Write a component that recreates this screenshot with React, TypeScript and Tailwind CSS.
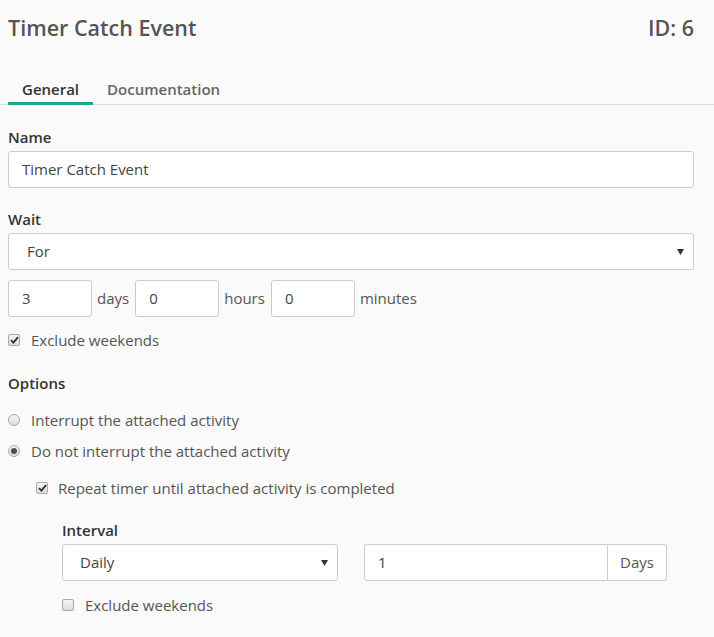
import React from "react";

const font = { fontFamily: '"Open Sans", "Liberation Sans", sans-serif' };

function Check({ checked }: { checked?: boolean }) {
  return (
    <span className="flex h-[12px] w-[12px] shrink-0 items-center justify-center rounded-[2px] border border-[#a9a9a9] bg-gradient-to-b from-[#f4f4f4] to-[#dedede]">
      {checked && (
        <svg width="9" height="8" viewBox="0 0 9 8">
          <path d="M1 4.2 L3.4 6.6 L8 1.2" fill="none" stroke="#333" strokeWidth="1.9" />
        </svg>
      )}
    </span>
  );
}

function Radio({ checked }: { checked?: boolean }) {
  return (
    <span className="flex h-[12px] w-[12px] shrink-0 items-center justify-center rounded-full border border-[#a9a9a9] bg-gradient-to-b from-[#f4f4f4] to-[#dedede]">
      {checked && <span className="h-[6px] w-[6px] rounded-full bg-[#4d4d4d]" />}
    </span>
  );
}

function Arrow() {
  return (
    <svg width="7" height="6" viewBox="0 0 7 6" className="shrink-0">
      <path d="M0 0 H7 L3.5 6 Z" fill="#333" />
    </svg>
  );
}

export default function App() {
  return (
    <div className="min-h-[637px] w-[714px] bg-[#fafafa] text-[15px] text-[#555]" style={font}>
      {/* Header */}
      <div className="flex items-center justify-between pl-2 pr-[20px] pt-[14px]">
        <h1 className="text-[21.5px] font-semibold leading-[28px] text-[#555]">Timer Catch Event</h1>
        <span className="text-[21.5px] font-semibold leading-[28px] text-[#555]">ID: 6</span>
      </div>

      {/* Tabs */}
      <div className="mt-[29px] flex border-b border-[#dddddd] px-2">
        <div className="-mb-px border-b-[3px] border-[#1ba58a] px-[14px] pb-[3px] pt-2 font-semibold leading-5 text-[#333]">
          General
        </div>
        <div className="-mb-px border-b-[3px] border-transparent px-[14px] pb-[3px] pt-2 font-semibold leading-5 text-[#666]">
          Documentation
        </div>
      </div>

      <div className="pl-2 pr-[20px]">
        {/* Name */}
        <div className="mt-[22px] font-semibold leading-5 text-[#333]">Name</div>
        <div className="mt-[4px] flex h-[37px] items-center rounded-[3px] border border-[#cccccc] bg-white px-[13px] text-[#444]">
          Timer Catch Event
        </div>

        {/* Wait */}
        <div className="mt-[21px] font-semibold leading-5 text-[#333]">Wait</div>
        <div className="mt-[4px] flex h-[37px] items-center justify-between rounded-[3px] border border-[#cccccc] bg-white pl-[18px] pr-[9px] text-[#444]">
          <span>For</span>
          <Arrow />
        </div>

        <div className="mt-[10px] flex items-center">
          <div className="flex h-[37px] w-[84px] items-center rounded-[3px] border border-[#cccccc] bg-white px-[13px] text-[#444]">3</div>
          <span className="ml-[5px] mr-[6px]">days</span>
          <div className="flex h-[37px] w-[84px] items-center rounded-[3px] border border-[#cccccc] bg-white px-[13px] text-[#444]">0</div>
          <span className="ml-[5px] mr-[6px]">hours</span>
          <div className="flex h-[37px] w-[84px] items-center rounded-[3px] border border-[#cccccc] bg-white px-[13px] text-[#444]">0</div>
          <span className="ml-[5px]">minutes</span>
        </div>

        <label className="mt-[13px] flex items-center gap-[11px] leading-5">
          <Check checked />
          <span>Exclude weekends</span>
        </label>

        {/* Options */}
        <div className="mt-[23px] font-semibold leading-5 text-[#333]">Options</div>
        <label className="mt-[17px] flex items-center gap-[11px] leading-5">
          <Radio />
          <span>Interrupt the attached activity</span>
        </label>
        <label className="mt-[11px] flex items-center gap-[11px] leading-5">
          <Radio checked />
          <span>Do not interrupt the attached activity</span>
        </label>
        <label className="ml-[28px] mt-[17px] flex items-center gap-[10px] leading-5">
          <Check checked />
          <span>Repeat timer until attached activity is completed</span>
        </label>

        {/* Interval */}
        <div className="ml-[54px]">
          <div className="mt-[22px] font-semibold leading-5 text-[#333]">Interval</div>
          <div className="mt-[4px] flex items-center gap-[26px]">
            <div className="flex h-[37px] w-[276px] items-center justify-between rounded-[3px] border border-[#cccccc] bg-white pl-[17px] pr-[9px] text-[#444]">
              <span>Daily</span>
              <Arrow />
            </div>
            <div className="flex h-[37px] w-[303px]">
              <div className="flex flex-1 items-center rounded-l-[3px] border border-[#cccccc] bg-white px-[13px] text-[#444]">1</div>
              <div className="flex items-center rounded-r-[3px] border border-l-0 border-[#cccccc] bg-white px-[12px] text-[#555]">Days</div>
            </div>
          </div>
          <label className="mt-[14px] flex items-center gap-[11px] leading-5">
            <Check />
            <span>Exclude weekends</span>
          </label>
        </div>
      </div>
    </div>
  );
}
